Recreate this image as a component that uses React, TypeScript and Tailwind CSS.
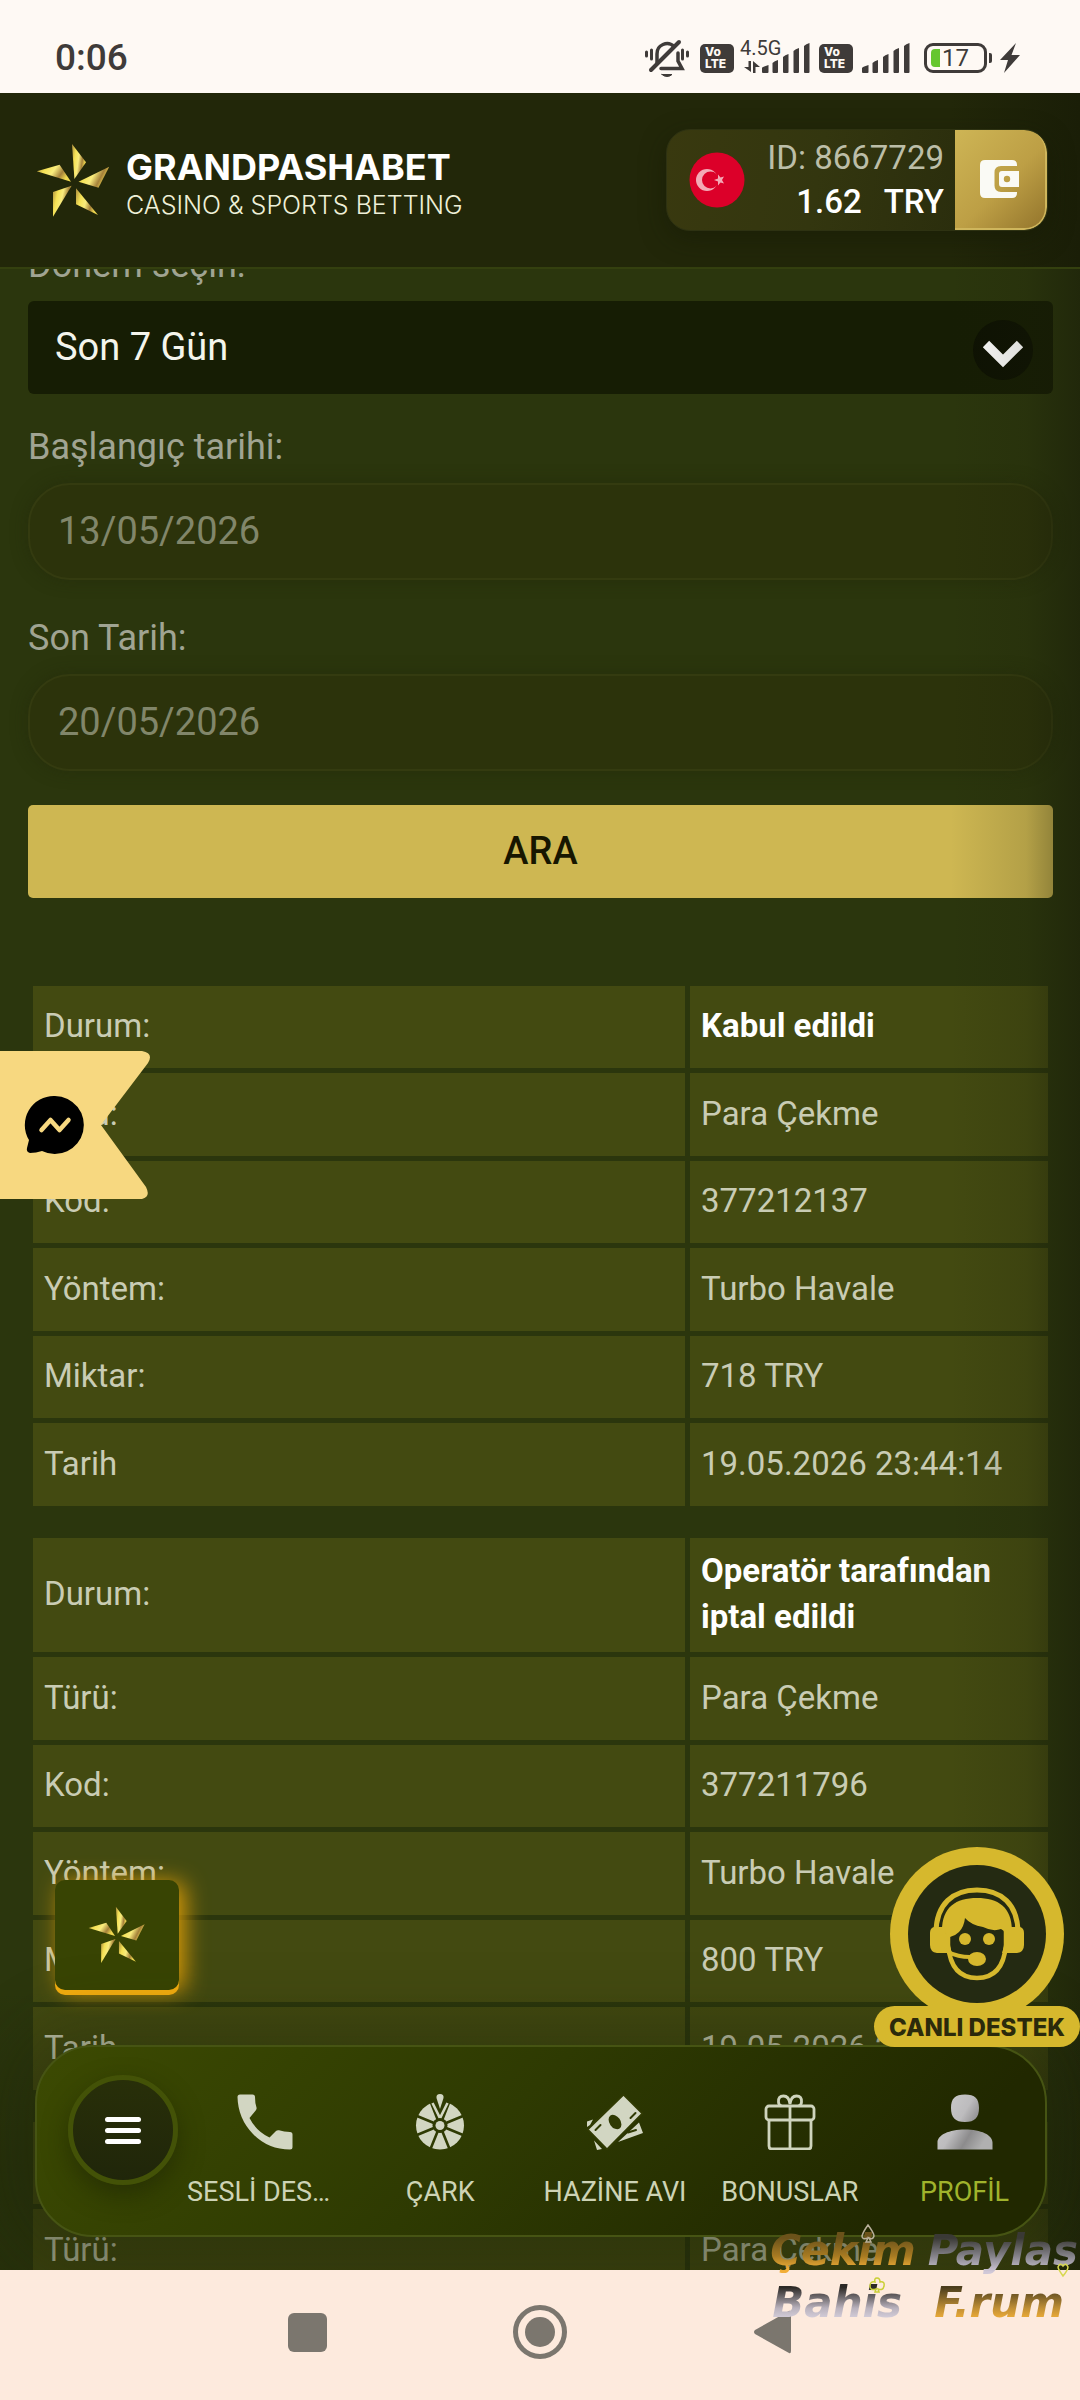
import React from "react";

type Row = [string, string];

const transactions: Row[][] = [
  [
    ["Durum:", "Kabul edildi"],
    ["Türü:", "Para Çekme"],
    ["Kod:", "377212137"],
    ["Yöntem:", "Turbo Havale"],
    ["Miktar:", "718 TRY"],
    ["Tarih", "19.05.2026 23:44:14"],
  ],
  [
    ["Durum:", "Operatör tarafından iptal edildi"],
    ["Türü:", "Para Çekme"],
    ["Kod:", "377211796"],
    ["Yöntem:", "Turbo Havale"],
    ["Miktar:", "800 TRY"],
    ["Tarih", "19.05.2026 23:34:18"],
  ],
  [
    ["Durum:", "Kabul edildi"],
    ["Türü:", "Para Çekme"],
  ],
];

function Star({ className, id }: { className: string; id: string }) {
  return (
    <svg viewBox="36 143 75 75" className={className} aria-hidden="true">
      <defs>
        <linearGradient id={id} x1="0" y1="0" x2="1" y2="0.35">
          <stop offset="0" stopColor="#a98a3c" />
          <stop offset="0.3" stopColor="#f5e255" />
          <stop offset="0.55" stopColor="#f9ec7d" />
          <stop offset="0.8" stopColor="#a5813a" />
          <stop offset="1" stopColor="#efd84f" />
        </linearGradient>
      </defs>
      <g fill={`url(#${id})`}>
        <path d="M72 144 86 162.3 74.4 179Z" />
        <path d="M109.2 166.7 98.5 187.7 78.5 181.7Z" />
        <path d="M98 215 76 204.3V188.3Z" />
        <path d="M53 216.7V192L71.6 185.7Z" />
        <path d="M36.8 171.3 59.6 164.7 71 181.7Z" />
      </g>
    </svg>
  );
}

function VoLte() {
  return (
    <div className="flex h-[29px] w-[34px] flex-col items-center justify-center rounded-[5px] bg-[#3f3b39] font-['Inter'] text-[12px] leading-[12px] font-extrabold text-[#fef9f4]">
      <span className="w-[24px]">Vo</span>
      <span className="w-[24px]">LTE</span>
    </div>
  );
}

function Signal() {
  return (
    <svg viewBox="0 0 48 30" className="h-[30px] w-[48px]" fill="#3f3b39" aria-hidden="true">
      <path d="M0 25q0-1 6.500-3v7q0 1-1 1H1q-1 0-1-1zM10.500 20q2-2 5.500-3v12q0 1-1 1h-3.500q-1 0-1-1zM21 14q2-2 5.500-3v18q0 1-1 1H22q-1 0-1-1zM31.500 8q2-2 5.500-3v24q0 1-1 1h-3.500q-1 0-1-1zM42 3q2-2 5.500-3v29q0 1-1 1H43q-1 0-1-1z" />
    </svg>
  );
}

function StatusBar() {
  return (
    <div className="flex h-[93px] shrink-0 items-center justify-between bg-[#fef9f4] pt-[23px] pr-[60px] pl-[55px] text-[#3f3b39]">
      <span className="text-[37px] leading-[40px] font-medium">0:06</span>
      <div className="flex items-center">
        <svg viewBox="0 0 44 38" className="mr-[11px] h-[38px] w-[44px]" fill="none" stroke="#3f3b39" strokeWidth="3.500" strokeLinecap="round" aria-hidden="true">
          <path d="M12 24v-9a10 10 0 0 1 17-7.500M33 14v8l4 7.500H16" />
          <path d="M34 3 6 31" strokeWidth="4" />
          <path d="M1.500 13v4M6.500 11v9M37.500 11v9M42.500 13v4" strokeWidth="3" />
          <path d="M17 35.500h10q-2 2-5 2t-5-2z" fill="#3f3b39" strokeWidth="1" />
        </svg>
        <VoLte />
        <div className="relative mr-[9px] ml-[28px]">
          <Signal />
          <span className="absolute -top-[5px] -left-[22px] text-[20px] leading-[20px]">4.5G</span>
          <svg viewBox="0 0 16 12" className="absolute bottom-0 -left-[18px] h-[12px] w-[16px]" fill="#3f3b39" aria-hidden="true">
            <path d="M4.500 0h2.500v11L0 6h4.500zM9 12h2.500V6H16L9 0z" />
          </svg>
        </div>
        <VoLte />
        <div className="ml-[9px]">
          <Signal />
        </div>
        <div className="relative ml-[14px] flex h-[30px] w-[63px] items-center justify-center rounded-[9px] border-[3px] border-[#3f3b39] text-[24px] leading-[24px]">
          <span className="absolute top-[3px] left-[4px] h-[18px] w-[9px] rounded-l-[4px] bg-[#66c62f]" />
          17
          <span className="absolute top-[7px] -right-[8px] h-[10px] w-[3px] rounded-r-[2px] bg-[#3f3b39]" />
        </div>
        <svg viewBox="0 0 20 30" className="ml-[13px] h-[30px] w-[20px]" fill="#3f3b39" aria-hidden="true">
          <path d="M16 0 0 17h8L4 30 20 12h-8.500z" />
        </svg>
      </div>
    </div>
  );
}

function Header() {
  return (
    <header className="flex h-[176px] shrink-0 items-center justify-between border-b-2 border-[#34400f] bg-[linear-gradient(90deg,#222709_0%,#222709_88%,#1a1e07_100%)] pr-[32px] pl-[36px]">
      <a href="#home" className="flex items-center gap-[15px] text-white">
        <Star className="h-[75px] w-[75px]" id="logo-gold" />
        <span className="flex flex-col pt-[10px] font-['Inter']">
          <span className="text-[36px] leading-[40px] font-bold">GRANDPASHABET</span>
          <span className="text-[25px] leading-[36px] font-light text-[#eef0d8]">CASINO &amp; SPORTS BETTING</span>
        </span>
      </a>
      <div className="flex h-[102px] overflow-hidden rounded-[24px] border border-[#2e3212] bg-[linear-gradient(100deg,#39390f_0%,#33360f_40%,#26290c_100%)] shadow-[0_8px_24px_#15190580]">
        <svg viewBox="0 0 56 56" className="my-auto ml-[22px] h-[56px] w-[56px]" role="img" aria-label="Türkiye">
          <circle cx="28" cy="28" r="27.500" fill="#dc0029" />
          <circle cx="18" cy="28" r="11" fill="#f3a9b6" />
          <circle cx="21.500" cy="28" r="8.500" fill="#dc0029" />
          <path d="m25 28 4-1.500v-4l2.500 3 3.500-1-2 3.500 2 3.500-3.500-1-2.500 3v-4z" fill="#f3a9b6" />
        </svg>
        <div className="flex w-[210px] flex-col justify-center pr-[11px] text-right">
          <span className="text-[33px] leading-[44px] text-[#bcbea8]">ID: 8667729</span>
          <span className="flex justify-end gap-[22px] text-[33px] leading-[44px] font-medium text-white">
            <span>1.62</span>
            <span>TRY</span>
          </span>
        </div>
        <button type="button" aria-label="Cüzdan" className="flex w-[92px] items-center justify-center rounded-r-[22px] border-r-2 border-b-2 border-[#cfb65c] bg-[linear-gradient(135deg,#ceb555_0%,#bd9f45_55%,#94752c_100%)]">
          <svg viewBox="0 0 40 38" className="h-[38px] w-[40px]" fill="#fafaf5" aria-hidden="true">
            <path d="M5 0h27q5 0 5 5v1H21q-6.500 0-6.500 6.500v13Q14.500 32 21 32h16v1q0 5-5 5H5q-5 0-5-5V5q0-5 5-5z" />
            <path fillRule="evenodd" d="M22 11h17v16H22q-3 0-3-3V14q0-3 3-3zm5 4.800a3.200 3.200 0 1 0 0 6.400 3.200 3.200 0 0 0 0-6.400z" />
          </svg>
        </button>
      </div>
    </header>
  );
}

const labelClass = "mb-[12px] text-[36px] leading-[48px] text-[#a0a492]";
const inputClass =
  "h-[97px] w-full rounded-[42px] border-2 border-[#343b10] bg-[#2c330b] px-[28px] pb-[2px] text-[38px] text-[#81866a] shadow-[0_0_16px_#21280a80]";

function SearchForm() {
  return (
    <form className="flex flex-col" onSubmit={(e) => e.preventDefault()}>
      <label htmlFor="period" className={labelClass}>
        Dönem seçin:
      </label>
      <div className="relative mb-[29px]">
        <select id="period" defaultValue="7" className="h-[93px] w-full appearance-none rounded-[6px] bg-[#161d04] px-[27px] text-[38px] text-[#f4f5ec]">
          <option value="7">Son 7 Gün</option>
        </select>
        <svg viewBox="0 0 60 60" className="pointer-events-none absolute top-[19px] right-[20px] h-[60px] w-[60px]" aria-hidden="true">
          <circle cx="30" cy="30" r="30" fill="#0e1203" />
          <path d="m13 24 17 17 17-17" fill="none" stroke="#ffffff" strokeWidth="9" />
        </svg>
      </div>
      <label htmlFor="start" className={labelClass}>
        Başlangıç tarihi:
      </label>
      <input id="start" defaultValue="13/05/2026" className={inputClass} />
      <label htmlFor="end" className={"mt-[34px] " + labelClass}>
        Son Tarih:
      </label>
      <input id="end" defaultValue="20/05/2026" className={inputClass} />
      <button type="submit" className="mt-[34px] h-[93px] w-full rounded-[5px] bg-[#ceb752] text-[38px] font-medium text-[#171600]">
        ARA
      </button>
    </form>
  );
}

const cellClass = "bg-[#434a11] px-[11px] pt-[10px] pb-[12px]";

function TransactionTable({ rows }: { rows: Row[] }) {
  return (
    <table className="w-full table-fixed border-separate border-spacing-[5px] text-left text-[33px] leading-[46px] text-[#c9ccb4]">
      <colgroup>
        <col />
        <col className="w-[358px]" />
      </colgroup>
      <tbody>
        {rows.map(([name, value], i) => (
          <tr key={name} className="odd:h-[82px] even:h-[83px]">
            <th scope="row" className={cellClass + " font-normal"}>
              {name}
            </th>
            <td className={i === 0 ? cellClass + " font-bold text-white" : cellClass}>{value}</td>
          </tr>
        ))}
      </tbody>
    </table>
  );
}

const iconClass = "h-[56px] w-[56px]";

function PhoneIcon() {
  return (
    <svg viewBox="0 0 56 56" className={iconClass} fill="#d2d6c2" aria-hidden="true">
      <path d="M3 .5h12.500q2.500 0 2.500 2.500 0 6.500 1.500 10.500.5 1.500-.8 3L12.500 24Q19 37 32.500 43.500l6.500-6.500q1.400-1.200 3-.7Q47 38 53 38q2.500 0 2.500 2.500V53q0 2.500-2.500 2.500Q31 55.500 16 40T.5 3Q.5.500 3 .5z" />
    </svg>
  );
}

function WheelIcon() {
  return (
    <svg viewBox="0 0 56 56" className={iconClass} aria-hidden="true">
      <circle cx="28" cy="31.500" r="24" fill="#d2d6c2" />
      <g stroke="#2f3b03" strokeWidth="2.600">
        <path d="M28 31.500 51 22M28 31.500 51 41M28 31.500 37.500 55M28 31.500 18.500 55M28 31.500 5 41M28 31.500 5 22M28 31.500 18 6M28 31.500 38 6" />
      </g>
      <path d="M18 4h20L28 27z" fill="#2f3b03" />
      <path d="M20.500 9 28 24l7.500-15" fill="none" stroke="#d2d6c2" strokeWidth="2.600" />
      <circle cx="28" cy="31.500" r="7.500" fill="#2f3b03" />
      <circle cx="28" cy="31.500" r="4.500" fill="#d2d6c2" />
      <path d="M28 0q4 0 3.500 4L28 15 24.500 4Q24 0 28 0z" fill="#d2d6c2" />
    </svg>
  );
}

function MoneyIcon() {
  return (
    <svg viewBox="0 0 56 56" className={iconClass} aria-hidden="true">
      <path d="M0 27.500 6 25.500 3 31 0 33zM52 28.500 56 39 31 48zM7 46.500 15 55 10 56z" fill="#d2d6c2" />
      <path d="m41 38.500 8-2.500" stroke="#303a03" strokeWidth="2" strokeLinecap="round" />
      <path d="m36.500.5 19 19-35.500 36L.5 35.500z" fill="#d2d6c2" stroke="#303a03" strokeWidth="2" />
      <ellipse cx="28" cy="28" rx="5.500" ry="8" fill="#303a03" transform="rotate(-35 28 28)" />
      <path d="m8.500 36 5-5M43.500 24l5-5" stroke="#303a03" strokeWidth="2" strokeLinecap="round" />
    </svg>
  );
}

function GiftIcon() {
  return (
    <svg viewBox="0 0 56 56" className={iconClass} fill="none" stroke="#cfd4bd" strokeWidth="2.800" aria-hidden="true">
      <rect x="4" y="12" width="48" height="14" rx="3" />
      <path d="M7 26v26q0 3 3 3h36q3 0 3-3V26M28 12v43" />
      <path d="M28 10Q27 2 21.500 2T16.500 8q0 3 3 4M28 10q1-8 6.500-8t5 6q0 3-3 4" />
    </svg>
  );
}

function ProfileIcon() {
  return (
    <svg viewBox="0 0 56 56" className={iconClass} aria-hidden="true">
      <defs>
        <linearGradient id="profile-silver" x1="0" y1="0" x2="1" y2="0.600">
          <stop offset="0" stopColor="#cfcfcf" />
          <stop offset="0.5" stopColor="#bdbcbe" />
          <stop offset="0.75" stopColor="#8c8b8c" />
          <stop offset="1" stopColor="#b0b0b0" />
        </linearGradient>
      </defs>
      <path d="M28 .5c10 0 14 4 14 13.500S38 28 28 28s-14-4.500-14-14S18 .5 28 .5zM.5 55.500v-7C.5 41 12 35.500 28 35.500S55.500 41 55.500 48.500v7z" fill="url(#profile-silver)" />
    </svg>
  );
}

const navItems = [
  { label: "SESLİ DESTEK", Icon: PhoneIcon, active: false },
  { label: "ÇARK", Icon: WheelIcon, active: false },
  { label: "HAZİNE AVI", Icon: MoneyIcon, active: false },
  { label: "BONUSLAR", Icon: GiftIcon, active: false },
  { label: "PROFİL", Icon: ProfileIcon, active: true },
];

function BottomNav() {
  return (
    <nav className="absolute right-[33px] bottom-[33px] left-[35px] flex h-[192px] items-center rounded-[58px] border-2 border-[#465413] bg-[linear-gradient(135deg,#3c4a02_0%,#2e3a02_45%,#212800_85%)] pl-[31px] shadow-[0_0_60px_30px_#1c230640]">
      <button type="button" aria-label="Menü" className="mb-[22px] flex h-[110px] w-[110px] shrink-0 flex-col items-center justify-center gap-[6px] rounded-full border-[5px] border-[#435207] bg-[linear-gradient(180deg,#282f09,#20260a)] shadow-[0_10px_24px_#1a200380]">
        <span className="h-[5px] w-[36px] rounded-full bg-white" />
        <span className="h-[5px] w-[36px] rounded-full bg-white" />
        <span className="h-[5px] w-[36px] rounded-full bg-white" />
      </button>
      <ul className="-mr-[7px] grid min-w-0 flex-1 grid-cols-5 pt-[18px]">
        {navItems.map(({ label, Icon, active }) => (
          <li key={label} className="min-w-0">
            <a href="#" className="flex flex-col items-center gap-[24px] px-[9px] pt-[3px]">
              <Icon />
              <span className={active ? "max-w-full truncate text-[27px] leading-[36px] text-[#a0b32c]" : "max-w-full truncate text-[27px] leading-[36px] text-[#cdd3b5]"}>{label}</span>
            </a>
          </li>
        ))}
      </ul>
    </nav>
  );
}

function MessengerRibbon() {
  return (
    <button type="button" aria-label="Messenger" className="absolute top-[782px] left-0">
      <svg viewBox="0 0 150 149" className="h-[149px] w-[150px]" aria-hidden="true">
        <path d="M0 0h142q12 2 6 12L101 74l45 62q5 10-4 12H0z" fill="#f7d880" />
        <path d="M55 45a29 29 0 1 1-13 55q-6 2-12 2-4-1-3-5l2-8A29 29 0 0 1 55 45z" fill="#000" />
        <path d="m41.500 79 9-10 9 10L68.500 69" fill="none" stroke="#f7d880" strokeWidth="4.500" strokeLinecap="round" strokeLinejoin="round" />
      </svg>
    </button>
  );
}

function LiveSupport() {
  return (
    <button type="button" className="absolute right-0 bottom-[223px] flex w-[206px] flex-col items-center">
      <svg viewBox="0 0 174 174" className="-mb-[15px] h-[174px] w-[174px]" aria-hidden="true">
        <circle cx="87" cy="87" r="87" fill="#d6b82d" />
        <circle cx="87" cy="87" r="69" fill="#242a12" />
        <path d="M46 86C46 57 63 43 87 43s41 14 41 43" fill="none" stroke="#d6b82d" strokeWidth="5" />
        <path d="M52 84C52 60 66 51 87 51s35 9 35 33l-6 8q0-8-5-10-8 3-18-2-12-2-18-9-1 9-6 14-4 4-9 5z" fill="#d6b82d" />
        <path d="M58 84v14q3 33 29 33t29-33V84" fill="none" stroke="#d6b82d" strokeWidth="4.500" />
        <path d="M44 80h10l8 26H47q-7-1-7-8V86q0-5 4-6zM130 80h-10l-8 26h15q7-1 7-8V86q0-5-4-6z" fill="#d6b82d" />
        <circle cx="75" cy="92" r="6" fill="#d6b82d" />
        <circle cx="99" cy="92" r="6" fill="#d6b82d" />
        <path d="M58 105q10 5 22 5" fill="none" stroke="#d6b82d" strokeWidth="4" />
        <ellipse cx="87" cy="112" rx="9" ry="7" fill="#d6b82d" />
      </svg>
      <span className="relative h-[41px] w-full rounded-full bg-[#d6b82d] text-center font-['Inter'] text-[24px] leading-[43px] font-extrabold whitespace-nowrap text-[#2b2a0b]">CANLI DESTEK</span>
    </button>
  );
}

function Watermark() {
  return (
    <div className="pointer-events-none absolute right-0 bottom-[71px] font-['DejaVu_Sans'] text-[42px] leading-[52px] font-bold italic">
      <div className="flex gap-[12px]">
        <span className="bg-[linear-gradient(180deg,#6b521a_25%,#a87b22_60%,#f2ae38_85%)] bg-clip-text text-transparent">Çekim</span>
        <span className="bg-[linear-gradient(180deg,#3a3935_25%,#85838a_60%,#d0c8d8_90%)] bg-clip-text pr-[2px] text-transparent">Paylas</span>
      </div>
      <div className="flex justify-between pr-[14px] pl-[2px]">
        <span className="bg-[linear-gradient(180deg,#2c2926_20%,#b9b2bd_60%,#ddd6e2_85%)] bg-clip-text pr-[2px] text-transparent">Bahis</span>
        <span className="bg-[linear-gradient(180deg,#4a3d1c_20%,#c08f36_60%,#fbb437_85%)] bg-clip-text pr-[2px] text-transparent">F.rum</span>
      </div>
      <svg viewBox="0 0 210 70" className="absolute -top-[1px] right-[10px] h-[70px] w-[210px]" fill="none" strokeWidth="1.500" aria-hidden="true">
        <path d="M8 1Q14 9 14 12 13 16 9 14l2 4H6l2-4Q2 16 2 12 3 8 8 1z" stroke="#b9b09a" />
        <path d="M203 52q-5-7-5-9 2-5 5-1 3-4 5 1 0 3-5 9z" stroke="#d8d850" />
        <path d="M16 65q-6 2-6-3t5-4q-1-4 2-4t3 4q5-1 4 4t-6 3l1 3h-4z" stroke="#c9cf35" />
      </svg>
    </div>
  );
}

function SystemNav() {
  return (
    <div className="relative flex h-[130px] shrink-0 items-center justify-center gap-[186px] bg-[#fdeadd] pb-[6px]">
      <button type="button" aria-label="Son uygulamalar" className="h-[39px] w-[39px] rounded-[6px] bg-[#7b766e]" />
      <button type="button" aria-label="Ana ekran" className="flex h-[54px] w-[54px] items-center justify-center rounded-full border-[5px] border-[#7b766e]">
        <span className="h-[30px] w-[30px] rounded-full bg-[#7b766e]" />
      </button>
      <button type="button" aria-label="Geri">
        <svg viewBox="0 0 39 44" className="h-[44px] w-[39px]" fill="#7b766e" aria-hidden="true">
          <path d="M36 1Q38 0 38 3v38q0 3-2 2L2 24q-2-2 0-4z" />
        </svg>
      </button>
      <Watermark />
    </div>
  );
}

export default function App() {
  return (
    <div className="flex h-screen min-h-[1200px] flex-col overflow-hidden font-['Roboto',sans-serif]">
      <StatusBar />
      <Header />
      <main className="relative min-h-0 flex-1 overflow-hidden bg-[#2b360d] pr-[27px] pl-[28px]">
        <div className="-mt-[28px]">
          <SearchForm />
          <div className="mt-[83px] flex flex-col gap-[22px]">
            {transactions.map((rows, i) => (
              <TransactionTable key={i} rows={rows} />
            ))}
          </div>
        </div>
        <div className="pointer-events-none absolute inset-0 bg-[linear-gradient(90deg,transparent_88%,#1b1e0826_95%,#171a0880_100%)]" />
        <div className="pointer-events-none absolute inset-x-0 bottom-0 h-[280px] bg-[linear-gradient(180deg,transparent,#1c22064d_60%)]" />
        <MessengerRibbon />
        <button type="button" aria-label="GrandPashaBet" className="absolute bottom-[280px] left-[55px] flex h-[110px] w-[124px] items-center justify-center rounded-[10px] bg-[#384403] shadow-[0_5px_0_#f5ae0f,6px_2px_22px_#d99a08]">
          <Star className="h-[58px] w-[58px]" id="float-gold" />
        </button>
        <BottomNav />
        <LiveSupport />
      </main>
      <SystemNav />
    </div>
  );
}
